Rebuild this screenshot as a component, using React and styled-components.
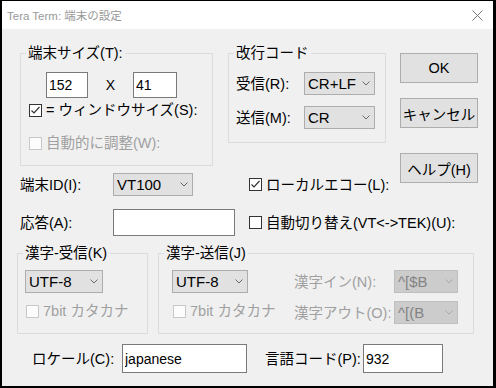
import styled, { createGlobalStyle } from 'styled-components';

const GlobalStyle = createGlobalStyle`
  html, body {
    margin: 0;
    padding: 0;
    background: #000;
  }
  body {
    width: 496px;
    height: 388px;
    overflow: hidden;
    font-family: "Liberation Sans", "Noto Sans CJK JP", sans-serif;
  }
`;

const Window = styled.div`
  margin: 1px 0 0 2px;
  width: 491px;
  height: 385px;
  background: #f0f0f0;
  display: flex;
  flex-direction: column;
`;

const TitleBar = styled.div`
  height: 28px;
  flex: none;
  background: #fff;
  display: flex;
  align-items: center;
  justify-content: space-between;
  padding: 0 10px 0 5px;
  font-size: 11.5px;
  color: #999;
`;

const Client = styled.div`
  flex: 1;
  padding: 15px 0 0 15px;
  font-size: 14.5px;
  line-height: 18px;
  color: #000;
`;

const Upper = styled.div`
  display: flex;
  align-items: flex-start;
  margin-left: 3px;
`;

const LeftArea = styled.div`
  display: flex;
  flex-direction: column;
  width: 366px;
  flex: none;
`;

const GroupsRow = styled.div`
  display: flex;
  align-items: flex-start;
  gap: 15px;
`;

const Group = styled.fieldset`
  margin: 0;
  padding: 0;
  min-width: 0;
  box-sizing: border-box;
  border: 1px solid #dcdcdc;
  width: ${p => p.$w}px;
  height: ${p => p.$h}px;
`;

const Legend = styled.legend`
  margin-left: 5px;
  padding: 0 2px;
  font-size: 14.5px;
  line-height: 18px;
`;

const SizeRow = styled.div`
  display: flex;
  align-items: center;
  margin: 10px 0 0 25px;
`;

const Times = styled.span`
  width: 45px;
  text-align: center;
  font-size: 14px;
`;

const TextInput = styled.input`
  box-sizing: border-box;
  width: ${p => p.$w}px;
  height: ${p => p.$h}px;
  margin: 0;
  padding: 0 0 0 2px;
  border: 1px solid #7a7a7a;
  background: #fff;
  font-family: "Liberation Sans", sans-serif;
  font-size: 14px;
  color: #000;
  outline: none;
`;

const CheckRow = styled.label`
  display: flex;
  align-items: center;
  gap: 4px;
  height: 18px;
  margin: ${p => p.$m || '0'};
  color: ${p => (p.$disabled ? '#a0a0a0' : '#000')};
  white-space: nowrap;
`;

const Box = styled.span`
  box-sizing: border-box;
  width: 13px;
  height: 13px;
  flex: none;
  border: 1px solid ${p => (p.$disabled ? '#c8c8c8' : '#333')};
  background: ${p => (p.$disabled ? '#fcfcfc' : '#fff')};
  display: flex;
  align-items: center;
  justify-content: center;
`;

const CodeRow = styled.div`
  display: grid;
  grid-template-columns: 68px 71px;
  align-items: center;
  margin: ${p => p.$m};
`;

const Select = styled.div`
  box-sizing: border-box;
  width: ${p => p.$w}px;
  height: 23px;
  display: flex;
  align-items: center;
  justify-content: space-between;
  padding: 0 4px 0 3px;
  background: ${p => (p.$disabled ? '#cccccc' : '#e1e1e1')};
  border: 1px solid ${p => (p.$disabled ? '#bfbfbf' : '#adadad')};
  color: ${p => (p.$disabled ? '#838383' : '#000')};
  font-size: 15px;
  white-space: nowrap;
`;

const FormRow = styled.div`
  display: grid;
  grid-template-columns: 93px 136px 137px;
  align-items: center;
  height: ${p => p.$h}px;
  margin-top: ${p => p.$mt}px;
  white-space: nowrap;
`;

const ButtonColumn = styled.div`
  display: flex;
  flex-direction: column;
  margin: 9px 0 0 14px;
`;

const Button = styled.button`
  box-sizing: border-box;
  width: 78px;
  height: 30px;
  margin: ${p => p.$mt || 0}px 0 0 0;
  padding: 0;
  background: #e1e1e1;
  border: 1px solid #adadad;
  font-family: "Liberation Sans", "Noto Sans CJK JP", sans-serif;
  font-size: 14.5px;
  color: #000;
`;

const KanjiRow = styled.div`
  display: flex;
  align-items: flex-start;
  gap: 10px;
  margin-top: 8px;
`;

const KanjiLeft = styled.div`
  display: flex;
  flex-direction: column;
  margin: 8px 0 0 ${p => p.$ml}px;
  width: ${p => p.$w}px;
  flex: none;
`;

const EscGrid = styled.div`
  display: grid;
  grid-template-columns: 100px 64px;
  grid-auto-rows: 23px;
  row-gap: 8px;
  align-items: center;
  margin-top: 8px;
  color: #a0a0a0;
  white-space: nowrap;
`;

const SendInner = styled.div`
  display: flex;
`;

const BottomRow = styled.div`
  display: flex;
  align-items: center;
  margin: 10px 0 0 15px;
  height: 29px;
`;

const Label = styled.span`
  width: ${p => p.$w}px;
  margin-left: ${p => p.$ml || 0}px;
  flex: none;
  white-space: nowrap;
`;

const Chevron = ({ disabled }) => (
  <svg width="8" height="5" viewBox="0 0 8 5">
    <polyline points="0.5,0.5 4,4 7.5,0.5" fill="none" stroke={disabled ? '#a8a8a8' : '#6a6a6a'} strokeWidth="1" />
  </svg>
);

const Combo = ({ value, w, disabled }) => (
  <Select $w={w} $disabled={disabled}>
    <span>{value}</span>
    <Chevron disabled={disabled} />
  </Select>
);

const Check = ({ checked, disabled, children, m }) => (
  <CheckRow $disabled={disabled} $m={m}>
    <Box $disabled={disabled}>
      {checked && (
        <svg width="11" height="11" viewBox="0 0 11 11">
          <polyline points="1.5,5.5 4,8 9.5,2" fill="none" stroke="#333" strokeWidth="1.2" />
        </svg>
      )}
    </Box>
    {children}
  </CheckRow>
);

export default function App() {
  return (
    <>
      <GlobalStyle />
      <Window>
        <TitleBar>
          <span>Tera Term: 端末の設定</span>
          <svg width="11" height="11" viewBox="0 0 11 11">
            <path d="M0.5 0.5 L10.5 10.5 M10.5 0.5 L0.5 10.5" stroke="#777" strokeWidth="1" />
          </svg>
        </TitleBar>
        <Client>
          <Upper>
            <LeftArea>
              <GroupsRow>
                <Group $w={193} $h={122}>
                  <Legend>端末サイズ(T):</Legend>
                  <SizeRow>
                    <TextInput $w={42} $h={26} value="152" readOnly />
                    <Times>X</Times>
                    <TextInput $w={44} $h={26} value="41" readOnly />
                  </SizeRow>
                  <Check checked m="3px 0 0 8px">= ウィンドウサイズ(S):</Check>
                  <Check disabled m="15px 0 0 8px">自動的に調整(W):</Check>
                </Group>
                <Group $w={158} $h={99}>
                  <Legend>改行コード</Legend>
                  <CodeRow $m="10px 0 0 7px">
                    <span>受信(R):</span>
                    <Combo value="CR+LF" w={71} />
                  </CodeRow>
                  <CodeRow $m="11px 0 0 7px">
                    <span>送信(M):</span>
                    <Combo value="CR" w={71} />
                  </CodeRow>
                </Group>
              </GroupsRow>
              <FormRow $h={23} $mt={7}>
                <span>端末ID(I):</span>
                <Combo value="VT100" w={80} />
                <Check checked>ローカルエコー(L):</Check>
              </FormRow>
              <FormRow $h={27} $mt={13}>
                <span>応答(A):</span>
                <TextInput $w={122} $h={27} value="" readOnly />
                <Check>自動切り替え(VT&lt;-&gt;TEK)(U):</Check>
              </FormRow>
            </LeftArea>
            <ButtonColumn>
              <Button>OK</Button>
              <Button $mt={15}>キャンセル</Button>
              <Button $mt={25}>ヘルプ(H)</Button>
            </ButtonColumn>
          </Upper>
          <KanjiRow>
            <Group $w={131} $h={90}>
              <Legend>漢字-受信(K)</Legend>
              <KanjiLeft $ml={7}>
                <Combo value="UTF-8" w={78} />
                <Check disabled m="9px 0 0 1px">7bit カタカナ</Check>
              </KanjiLeft>
            </Group>
            <Group $w={316} $h={90}>
              <Legend>漢字-送信(J)</Legend>
              <SendInner>
                <KanjiLeft $ml={13} $w={122}>
                  <Combo value="UTF-8" w={76} />
                  <Check disabled m="9px 0 0 1px">7bit カタカナ</Check>
                </KanjiLeft>
                <EscGrid>
                  <span>漢字イン(N):</span>
                  <Combo value="^[$B" w={64} disabled />
                  <span>漢字アウト(O):</span>
                  <Combo value="^[(B" w={64} disabled />
                </EscGrid>
              </SendInner>
            </Group>
          </KanjiRow>
          <BottomRow>
            <Label $w={90}>ロケール(C):</Label>
            <TextInput $w={125} $h={29} value="japanese" readOnly />
            <Label $w={98} $ml={18}>言語コード(P):</Label>
            <TextInput $w={80} $h={29} value="932" readOnly />
          </BottomRow>
        </Client>
      </Window>
    </>
  );
}
